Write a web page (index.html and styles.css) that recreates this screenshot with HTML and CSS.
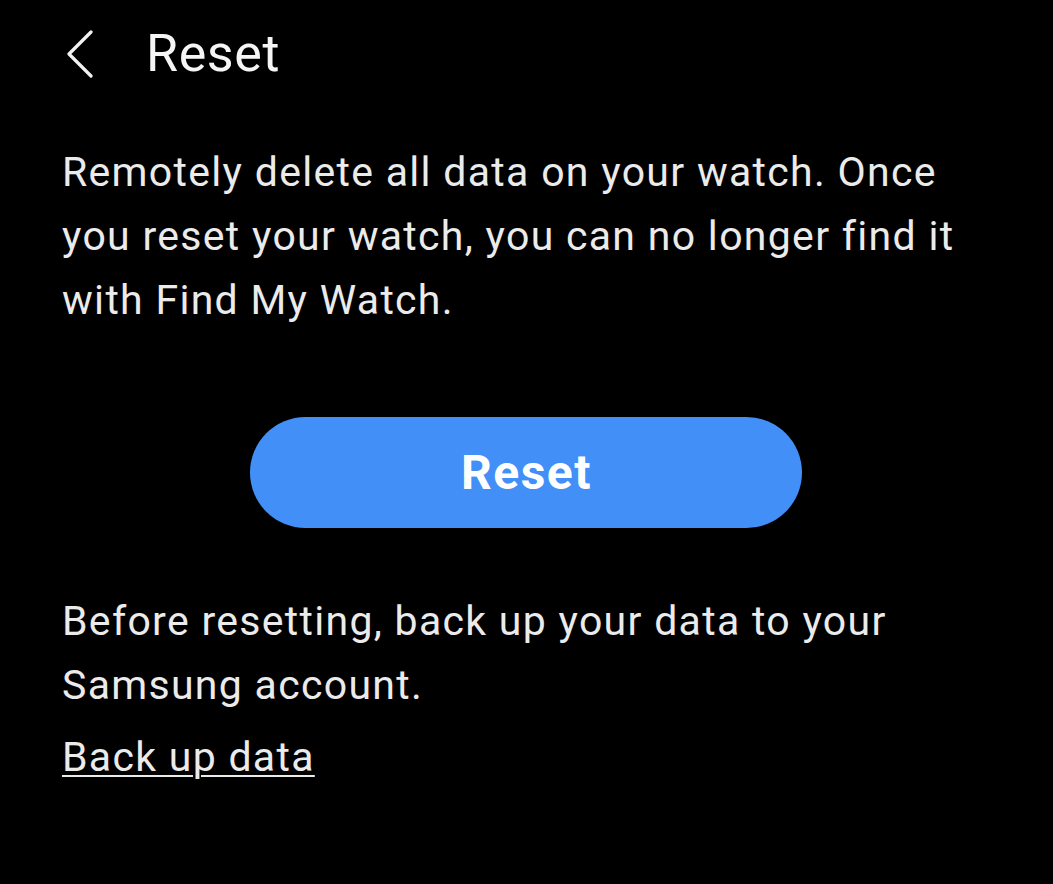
FILE: index.html
```html
<!DOCTYPE html>
<html lang="en">
<head>
<meta charset="utf-8">
<title>Reset</title>
<link rel="stylesheet" href="styles.css">
</head>
<body>
<div class="page">
  <header class="header">
    <span class="back" aria-label="Back">
      <svg width="30" height="48" viewBox="0 0 30 48"><path d="M25 2 L3 24 L25 46" fill="none" stroke="#f2f2f2" stroke-width="3.2" stroke-linecap="round" stroke-linejoin="round"/></svg>
    </span>
    <h1 class="title">Reset</h1>
  </header>
  <p class="desc">Remotely delete all data on your watch. Once you reset your watch, you can no longer find it with Find My Watch.</p>
  <div class="btn-row"><button class="reset-btn">Reset</button></div>
  <p class="desc desc-2">Before resetting, back up your data to your Samsung account.</p>
  <a class="link" href="#">Back up data</a>
</div>
</body>
</html>
```
FILE: styles.css
```css
html, body {
  margin: 0;
  padding: 0;
  background: #000;
}
body {
  width: 1053px;
  height: 884px;
  overflow: hidden;
  font-family: Roboto, "Noto Sans", sans-serif;
  color: #ebebeb;
}
.page {
  padding: 0 60px 0 62px;
}
.header {
  display: flex;
  align-items: center;
  height: 88px;
  padding-top: 19px;
  box-sizing: border-box;
}
.back {
  display: flex;
  width: 80px;
  margin-left: 4px;
}
.title {
  margin: 0;
  font-size: 52px;
  font-weight: 400;
  line-height: 64px;
  letter-spacing: 0.6px;
  color: #f5f5f5;
}
.desc {
  margin: 52px 0 0;
  font-size: 41px;
  line-height: 64px;
  letter-spacing: 1.3px;
}
.btn-row {
  display: flex;
  margin-top: 85px;
  padding-left: 188px;
}
.reset-btn {
  width: 552px;
  height: 111px;
  border: none;
  border-radius: 56px;
  background: #418ff7;
  color: #fff;
  font-family: Roboto, "Noto Sans", sans-serif;
  font-size: 48px;
  font-weight: 700;
  letter-spacing: 1.5px;
  padding: 0 0 0 1px;
}
.desc-2 {
  margin-top: 61px;
}
.link {
  display: block;
  margin-top: 8px;
  font-size: 41px;
  line-height: 64px;
  letter-spacing: 1.3px;
  color: #ebebeb;
  text-decoration: underline;
  text-decoration-thickness: 2px;
  text-underline-offset: 4px;
}
```
